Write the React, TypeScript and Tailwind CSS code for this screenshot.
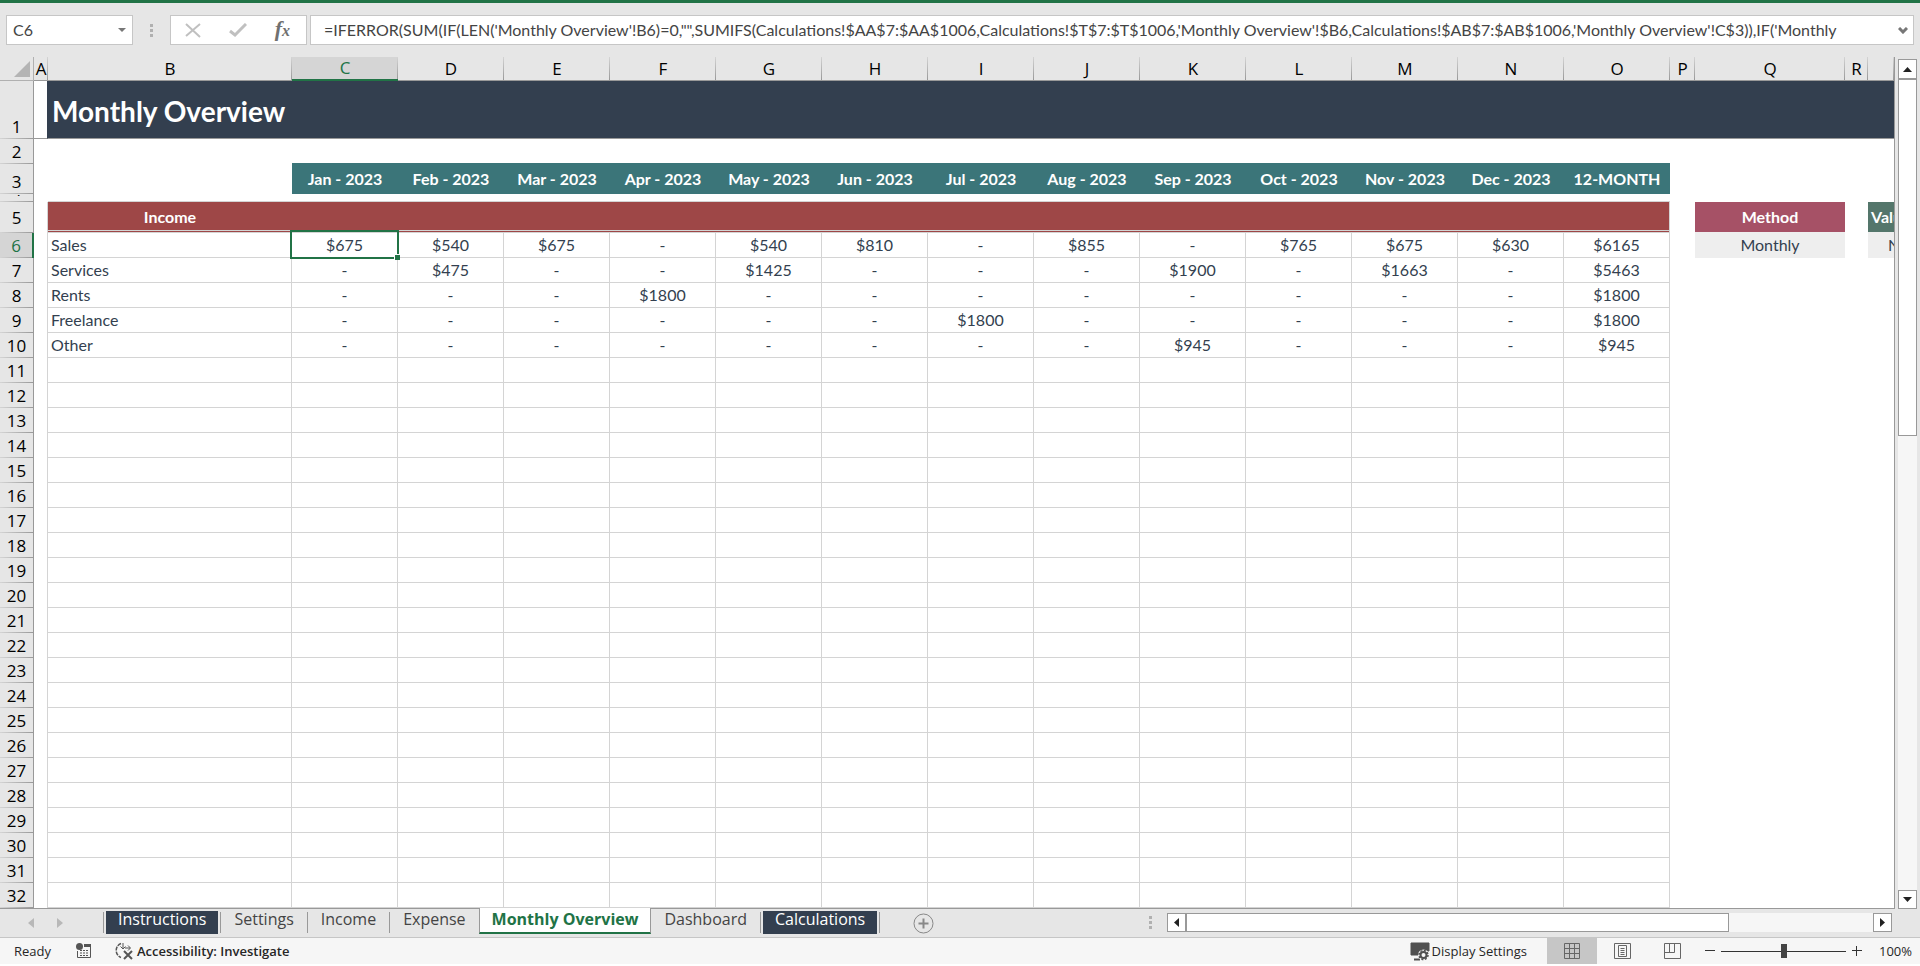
import type { ReactNode } from "react";
import clsx from "clsx";

const formula =
  "=IFERROR(SUM(IF(LEN('Monthly Overview'!B6)=0,\"\",SUMIFS(Calculations!$AA$7:$AA$1006,Calculations!$T$7:$T$1006,'Monthly Overview'!$B6,Calculations!$AB$7:$AB$1006,'Monthly Overview'!C$3)),IF('Monthly";

const months = [
  "Jan - 2023",
  "Feb - 2023",
  "Mar - 2023",
  "Apr - 2023",
  "May - 2023",
  "Jun - 2023",
  "Jul - 2023",
  "Aug - 2023",
  "Sep - 2023",
  "Oct - 2023",
  "Nov - 2023",
  "Dec - 2023",
  "12-MONTH",
];

const monthColumns = ["C", "D", "E", "F", "G", "H", "I", "J", "K", "L", "M", "N", "O"];

/** one entry per category, amounts in column order, 0 shows as a dash */
const income = [
  { name: "Sales", amounts: [675, 540, 675, 0, 540, 810, 0, 855, 0, 765, 675, 630, 6165] },
  { name: "Services", amounts: [0, 475, 0, 0, 1425, 0, 0, 0, 1900, 0, 1663, 0, 5463] },
  { name: "Rents", amounts: [0, 0, 0, 1800, 0, 0, 0, 0, 0, 0, 0, 0, 1800] },
  { name: "Freelance", amounts: [0, 0, 0, 0, 0, 0, 1800, 0, 0, 0, 0, 0, 1800] },
  { name: "Other", amounts: [0, 0, 0, 0, 0, 0, 0, 0, 945, 0, 0, 0, 945] },
];

const firstRow = 6;
const lastRow = 32;

const bodyRows = Array.from({ length: lastRow - firstRow + 1 }, (_, index) => ({
  number: firstRow + index,
  entry: income[index],
}));

const format = (amount: number) => (amount ? `$${amount}` : "-");

function ColumnHead({ children, active = false }: { children?: ReactNode; active?: boolean }) {
  return (
    <th
      scope="col"
      className={clsx(
        "h-6 p-0 font-['Open_Sans',sans-serif] text-[17px] leading-[22px] font-normal",
        "bg-[linear-gradient(to_bottom,#d4d4d4,#999)] bg-[length:1px_100%] bg-right bg-no-repeat",
        active
          ? "border-b-2 border-[#217346] bg-[#d5d5d5] text-[#217346]"
          : "border-b border-[#999] text-black",
      )}
    >
      {children}
    </th>
  );
}

function RowHead({ children, active = false }: { children: ReactNode; active?: boolean }) {
  return (
    <th
      scope="row"
      className={clsx(
        "p-0 align-bottom font-['Open_Sans',sans-serif] text-[17px] leading-6 font-normal",
        "bg-[linear-gradient(to_right,#d4d4d4,#999)] bg-[length:100%_1px] bg-bottom bg-no-repeat",
        active
          ? "border-r-2 border-[#217346] bg-[#d5d5d5] text-[#217346]"
          : "border-r border-[#999] bg-[#e6e6e6] text-black",
      )}
    >
      {children}
    </th>
  );
}

function Grip() {
  return (
    <span className="flex flex-col gap-0.5">
      <span className="size-[3px] bg-[#b0b0b0]" />
      <span className="size-[3px] bg-[#b0b0b0]" />
      <span className="size-[3px] bg-[#b0b0b0]" />
    </span>
  );
}

function FormulaBar() {
  return (
    <div className="flex h-[54px] items-start border-t-3 border-[#217346] px-1.5 pt-3">
      <div className="flex h-[30px] w-[127px] items-center border border-[#c6c6c6] bg-white pr-1.5 pl-1.5">
        <input
          aria-label="Name box"
          defaultValue="C6"
          className="w-full min-w-0 grow bg-transparent text-[#444] outline-none"
        />
        <button aria-label="Open name list" className="shrink-0">
          <svg width="8" height="4" fill="#777">
            <path d="M0 0h8L4 4z" />
          </svg>
        </button>
      </div>
      <div className="flex h-[30px] w-[37px] items-center justify-center">
        <Grip />
      </div>
      <div className="mr-[3px] flex h-[30px] w-[137px] items-center justify-between border border-[#c6c6c6] bg-white pr-4 pl-3.5">
        <button aria-label="Cancel">
          <svg width="17" height="15" fill="none" stroke="#c0c0c0" strokeWidth="2">
            <path d="M1 1l14 13M15 1L1 13" />
          </svg>
        </button>
        <button aria-label="Enter">
          <svg width="18" height="14" fill="none" stroke="#c0c0c0" strokeWidth="3">
            <path d="M1 8l5 4L17 1" />
          </svg>
        </button>
        <button
          aria-label="Insert function"
          className="font-['Liberation_Serif',serif] text-[22px] leading-6 font-bold text-[#707070] italic"
        >
          f<span className="text-[16px]">x</span>
        </button>
      </div>
      <div className="flex h-[30px] min-w-0 grow items-center border border-[#c6c6c6] bg-white pr-[5px] pl-[13px]">
        <input
          aria-label="Formula"
          defaultValue={formula}
          className="min-w-0 grow bg-transparent text-[#444] outline-none"
        />
        <button aria-label="Expand formula bar" className="shrink-0">
          <svg width="10" height="7" fill="none" stroke="#777" strokeWidth="3">
            <path d="M1 1l4 4 4-4" />
          </svg>
        </button>
      </div>
    </div>
  );
}

function Sheet() {
  return (
    <div className="min-w-0 grow overflow-hidden border-r border-b border-[#999]">
      <table className="w-full table-fixed border-separate border-spacing-0 bg-white text-center text-[#333f4f]">
        <colgroup>
          <col className="w-[34px]" />
          <col className="w-3.5" />
          <col className="w-[244px]" />
          {monthColumns.map((column) => (
            <col key={column} className="w-[106px]" />
          ))}
          <col className="w-[25px]" />
          <col className="w-[150px]" />
          <col className="w-[23px]" />
          <col />
        </colgroup>
        <thead className="bg-[#e6e6e6]">
          <tr>
            <td className="border-r border-b border-[#b0b0b0] p-0">
              <button aria-label="Select all" className="flex w-full justify-end pr-[3px]">
                <svg width="16" height="16" fill="#b4b4b4">
                  <path d="M16 0v16H0z" />
                </svg>
              </button>
            </td>
            <ColumnHead>A</ColumnHead>
            <ColumnHead>B</ColumnHead>
            {monthColumns.map((column) => (
              <ColumnHead key={column} active={column === "C"}>
                {column}
              </ColumnHead>
            ))}
            <ColumnHead>P</ColumnHead>
            <ColumnHead>Q</ColumnHead>
            <ColumnHead>R</ColumnHead>
            <ColumnHead />
          </tr>
        </thead>
        <tbody>
          <tr className="h-[58px]">
            <RowHead>1</RowHead>
            <td className="border-r border-b border-r-[#333f4f] border-b-[#999]" />
            <td
              colSpan={18}
              className="border-b border-[#999] bg-[#333f4f] px-1 pt-0.5 pb-0 text-left text-[28px] leading-9 font-bold text-white"
            >
              Monthly Overview
            </td>
          </tr>
          <tr className="h-[25px]">
            <RowHead>2</RowHead>
            <td colSpan={2} />
            <td colSpan={13} className="border-b border-[#3b7579]" />
          </tr>
          <tr className="h-[30px]">
            <RowHead>3</RowHead>
            <td />
            <td />
            {months.map((month) => (
              <th key={month} scope="col" className="bg-[#3b7579] p-0 leading-6 text-white">
                {month}
              </th>
            ))}
          </tr>
          <tr className="h-2">
            <RowHead>
              <span className="flex h-[7px] items-end justify-center overflow-hidden">4</span>
            </RowHead>
            <td className="p-0" />
            <td colSpan={14} className="border-b border-[#d4d4d4] p-0" />
          </tr>
          <tr className="h-[31px]">
            <RowHead>
              <span className="block pb-[3px]">5</span>
            </RowHead>
            <td className="border-r border-[#d4d4d4]" />
            <th className="border-b-3 border-double border-[#d4d4d4] bg-[#9e4747] px-0 pt-0.5 pb-0 leading-6 text-white">
              Income
            </th>
            <td
              colSpan={13}
              className="border-r border-b-3 border-[#d4d4d4] bg-[#9e4747] p-0 [border-bottom-style:double]"
            />
            <td />
            <th className="border-b border-[#eee] bg-[#a65166] p-0 leading-6 text-white">Method</th>
            <td />
            <th className="overflow-hidden border-b border-[#eee] bg-[#54766b] py-0 pr-0 pl-[3px] text-left leading-6 text-white">
              Value
            </th>
          </tr>
          {bodyRows.map(({ number, entry }) => (
            <tr key={number} className="h-[25px]">
              <RowHead active={number === 6}>{number}</RowHead>
              <td className="border-r border-[#d4d4d4] p-0" />
              <td className="border-r border-b border-[#d4d4d4] px-[3px] py-0 text-left leading-6">
                {entry?.name}
              </td>
              {monthColumns.map((column, index) => (
                <td
                  key={column}
                  className="relative border-r border-b border-[#d4d4d4] p-0 leading-6"
                >
                  {entry && format(entry.amounts[index]!)}
                  {number === 6 && column === "C" && (
                    <span className="absolute -inset-0.5 -top-[3px] z-10 border-2 border-[#217346]">
                      <span className="absolute -right-[3px] -bottom-[3px] size-1.5 border-t border-l border-white bg-[#217346]" />
                    </span>
                  )}
                </td>
              ))}
              {number === 6 && (
                <>
                  <td />
                  <td className="border-b border-[#eee] bg-[#eee] p-0 leading-6">Monthly</td>
                  <td />
                  <td className="overflow-hidden border-b border-[#eee] bg-[#eee] py-0 pr-0 pl-5 text-left leading-6">
                    No
                  </td>
                </>
              )}
            </tr>
          ))}
        </tbody>
      </table>
    </div>
  );
}

function VerticalScroll() {
  return (
    <div className="flex w-[25px] shrink-0 flex-col px-[3px] pt-0.5">
      <button
        aria-label="Scroll up"
        className="flex h-5 shrink-0 items-center justify-center border border-[#999] bg-white"
      >
        <svg width="9" height="5" fill="#222">
          <path d="M0 5h9L4.500 0z" />
        </svg>
      </button>
      <div className="flex grow flex-col bg-[#f6f6f6]">
        <div className="h-[44%] border border-[#999] bg-white" />
      </div>
      <button
        aria-label="Scroll down"
        className="flex h-[19px] shrink-0 items-center justify-center border border-[#999] bg-white"
      >
        <svg width="9" height="5" fill="#222">
          <path d="M0 0h9L4.500 5z" />
        </svg>
      </button>
    </div>
  );
}

function Tab({ children, dark = false }: { children: ReactNode; dark?: boolean }) {
  return (
    <button
      className={clsx(
        "mt-0.5 h-[23px] pb-2 leading-4",
        dark ? "mx-0.5 bg-[#333f4f] px-3 text-white" : "px-[13px] text-[#444]",
      )}
    >
      {children}
    </button>
  );
}

function Divider() {
  return <span className="mt-[3px] h-[21px] w-px bg-[#999]" />;
}

function TabBar() {
  return (
    <div className="flex h-7 items-start justify-between bg-[#e6e6e6] font-['Open_Sans',sans-serif]">
      <div className="flex items-start">
        <div className="flex h-7 w-[103px] items-center gap-[23px] pl-7">
          <button aria-label="Previous sheets">
            <svg width="6" height="10" fill="#b8b8b8">
              <path d="M6 0v10L0 5z" />
            </svg>
          </button>
          <button aria-label="Next sheets">
            <svg width="6" height="10" fill="#b8b8b8">
              <path d="M0 0v10l6-5z" />
            </svg>
          </button>
        </div>
        <Divider />
        <Tab dark>Instructions</Tab>
        <Divider />
        <Tab>Settings</Tab>
        <Divider />
        <Tab>Income</Tab>
        <Divider />
        <Tab>Expense</Tab>
        <button className="-mt-px h-[26px] border-x border-b-2 border-x-[#999] border-b-[#217346] bg-white px-3 pb-0.5 leading-4 font-bold text-[#217346]">
          Monthly Overview
        </button>
        <Tab>Dashboard</Tab>
        <Divider />
        <Tab dark>Calculations</Tab>
        <Divider />
        <button aria-label="New sheet" className="mt-1 ml-[33px]">
          <svg width="21" height="21" fill="none" stroke="#888">
            <circle cx="10.500" cy="10.500" r="9.500" />
            <path d="M5.500 10.500h10M10.500 5.500v10" strokeWidth="2" />
          </svg>
        </button>
      </div>
      <div className="mt-1 flex h-[19px] items-center">
        <Grip />
        <div className="ml-[15px] flex h-[19px] w-[725px] bg-[#f6f6f6]">
          <button
            aria-label="Scroll left"
            className="flex w-[19px] items-center justify-center border border-[#999] bg-white"
          >
            <svg width="5" height="9" fill="#222">
              <path d="M5 0v9L0 4.500z" />
            </svg>
          </button>
          <div className="w-[543px] border border-[#999] bg-white" />
          <button
            aria-label="Scroll right"
            className="ml-auto flex w-[19px] items-center justify-center border border-[#999] bg-white"
          >
            <svg width="5" height="9" fill="#222">
              <path d="M0 0v9l5-4.500z" />
            </svg>
          </button>
        </div>
        <div className="w-7" />
      </div>
    </div>
  );
}

function StatusBar() {
  return (
    <div className="flex h-[27px] items-center justify-between border-t border-[#c6c6c6] bg-[#f6f6f6] font-['Open_Sans',sans-serif] text-[13px] leading-5 text-[#262626]">
      <div className="flex items-center pl-3.5">
        <span className="w-[62px]">Ready</span>
        <button aria-label="Record macro" className="mr-[22px]">
          <svg width="16" height="16" fill="none" stroke="#555">
            <circle cx="3.500" cy="3.500" r="3.500" fill="#555" stroke="none" />
            <path d="M1.500 8v6.500h13V3.500" />
            <path d="M8 2.500h7" strokeWidth="3" />
            <path d="M4 7.500h9M4 10h9M4 12.500h9" strokeDasharray="2 1" />
          </svg>
        </button>
        <button className="flex items-center gap-1 font-semibold">
          <svg width="19" height="18" fill="none" stroke="#555">
            <path d="M7 1.500a7.500 7.500 0 0 0 0 14" strokeWidth="1.500" strokeDasharray="4 1" />
            <path d="M9 1v6M6.500 4.500L9 7l2.500-2.500M11 6h5M14 3.500L16.500 6 14 8.500" />
            <path d="M10 9l8 8M18 9l-8 8" strokeWidth="2" />
          </svg>
          Accessibility: Investigate
        </button>
      </div>
      <div className="flex h-full items-center pr-2">
        <button className="mr-5 flex items-center gap-0.5">
          <svg width="20" height="19" fill="none" stroke="#505050">
            <path d="M1 1h18v8H1z M1 9h9v4H1z" fill="#505050" />
            <path d="M4 17.500h6" strokeWidth="2" />
            <circle cx="13.500" cy="13" r="5.500" fill="#f6f6f6" stroke="none" />
            <circle cx="13.500" cy="13" r="3" strokeWidth="2" />
            <circle cx="13.500" cy="13" r="4.500" strokeWidth="1.500" strokeDasharray="2 1.500" />
          </svg>
          Display Settings
        </button>
        <button aria-label="Normal" className="flex h-full w-[50px] items-center justify-center bg-[#c6c6c6]">
          <svg width="16" height="16" fill="none" stroke="#666">
            <path d="M.5.5h15v15H.5zM.5 5.500h15M.5 10.500h15M5.500.5v15M10.500.5v15" />
          </svg>
        </button>
        <button aria-label="Page layout" className="flex h-full w-[50px] items-center justify-center">
          <svg width="17" height="16" fill="none" stroke="#666">
            <path d="M.5.5h16v15H.5zM4.500 2.500h8v11h-8zM6.500 5.500h4M6.500 7.500h4M6.500 9.500h4M6.500 11.500h4" />
          </svg>
        </button>
        <button aria-label="Page break preview" className="flex h-full w-[50px] items-center justify-center">
          <svg width="17" height="16" fill="none" stroke="#666">
            <path d="M.5.5h16v15H.5zM5.500.5v9M.5 9.500h10v-9" />
          </svg>
        </button>
        <button aria-label="Zoom out" className="ml-2">
          <svg width="10" height="10" stroke="#333">
            <path d="M0 4.500h10" />
          </svg>
        </button>
        <input
          aria-label="Zoom level"
          type="range"
          className="
            mx-1.5 h-4 w-[125px] appearance-none bg-[linear-gradient(#333,#333)]
            bg-[length:100%_1px] bg-center bg-no-repeat
            [&::-webkit-slider-thumb]:h-3.5 [&::-webkit-slider-thumb]:w-1.5
            [&::-webkit-slider-thumb]:appearance-none [&::-webkit-slider-thumb]:bg-[#444]
          "
        />
        <button aria-label="Zoom in">
          <svg width="10" height="10" stroke="#333">
            <path d="M0 4.500h10M4.500 0v10" />
          </svg>
        </button>
        <span className="w-[50px] text-right">100%</span>
      </div>
    </div>
  );
}

export default function App() {
  return (
    <div className="bg-[#e6e6e6] font-[Lato,sans-serif] text-[16px]">
      <FormulaBar />
      <main className="flex pt-[3px]">
        <Sheet />
        <VerticalScroll />
      </main>
      <TabBar />
      <StatusBar />
    </div>
  );
}
